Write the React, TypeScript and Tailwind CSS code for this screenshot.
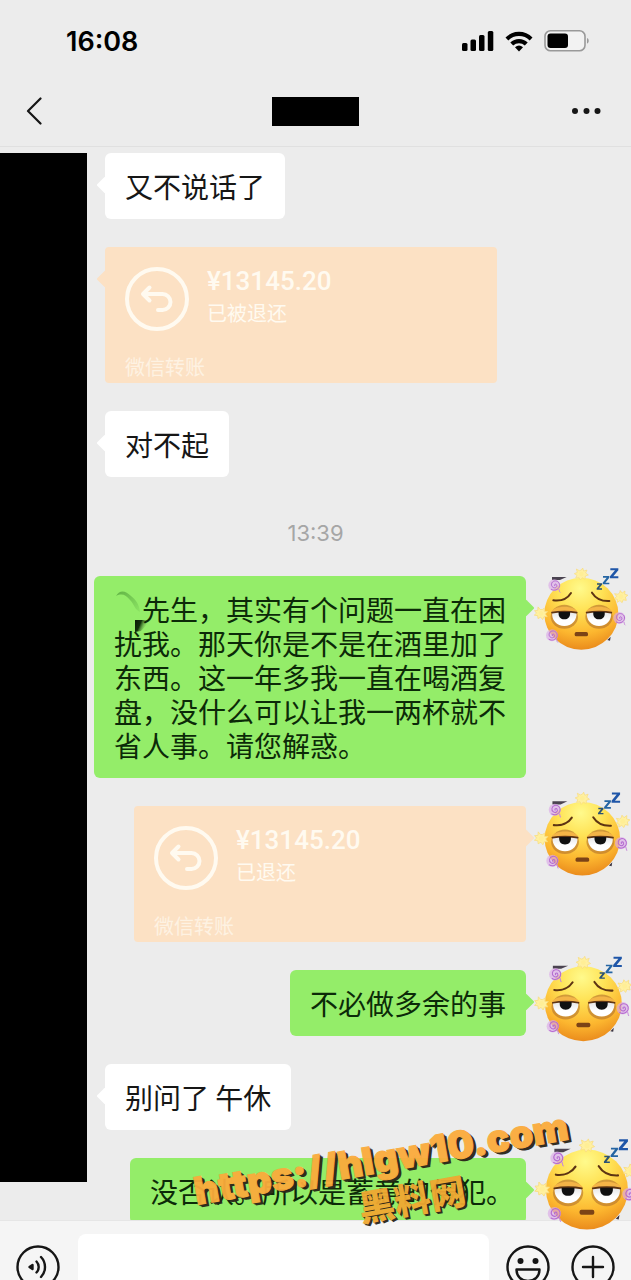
import type { ReactNode } from "react";

const cjk = "font-['Noto_Sans_CJK_SC',sans-serif]";

function Spiral({ x, y }: { x: number; y: number }) {
  return (
    <g transform={`translate(${x} ${y})`} fill="none" strokeLinecap="round">
      <circle r="18" fill="#dcaae8" fillOpacity="0.65" />
      <path
        d="M1 1c-3-4 4-7 6-2 3 6-5 11-11 7-8-5-5-17 4-19 10-2 18 7 15 17-3 9-15 14-24 8"
        stroke="#b46bd0"
        strokeWidth="3"
      />
      <path d="M14 12c2 4 0 7 3 9" stroke="#c78adb" strokeWidth="3" />
    </g>
  );
}

function Sparkle({ x, y, r }: { x: number; y: number; r: number }) {
  return (
    <g transform={`translate(${x} ${y}) rotate(${r})`}>
      <path
        d="M0-12 4-18 7-9 17-12 13-3 21 3 12 6 11 16 3 11-3 18-7 10-17 12-13 4-21-1-12-5-15-15-6-10Z"
        fill="#fff0a0"
        stroke="#f9dc7c"
        strokeWidth="2"
        strokeLinejoin="round"
      />
      <circle r="7" fill="#ffee96" />
    </g>
  );
}

function SleepyFace({ size }: { size: string }) {
  return (
    <svg viewBox="0 0 303 300" className={`shrink-0 ${size}`} role="img" aria-label="头像">
      <defs>
        <radialGradient id="skin" cx="0.48" cy="0.15" r="0.88">
          <stop offset="0" stopColor="#fffa8c" />
          <stop offset="0.35" stopColor="#ffe255" />
          <stop offset="0.72" stopColor="#fcb62f" />
          <stop offset="1" stopColor="#e8861a" />
        </radialGradient>
        <linearGradient id="eye" x1="0" y1="0" x2="0" y2="1">
          <stop offset="0" stopColor="#e6e6e6" />
          <stop offset="0.6" stopColor="#ffffff" />
        </linearGradient>
      </defs>
      <path d="M66 51h44l-20 9H66Z" fill="#4a4350" />
      <path d="m232 240 10-10-2 12Z" fill="#3a3340" />
      <ellipse cx="154" cy="161" rx="111" ry="108" fill="url(#skin)" />
      <ellipse cx="103" cy="170" rx="41" ry="36" fill="#b9772c" fillOpacity="0.65" />
      <ellipse cx="207" cy="170" rx="41" ry="36" fill="#b9772c" fillOpacity="0.65" />
      <path d="M67 156h72c4 24-14 42-36 42s-40-18-36-42Z" fill="url(#eye)" />
      <path d="M171 156h72c4 24-14 42-36 42s-40-18-36-42Z" fill="url(#eye)" />
      <path d="M62 158c8-24 74-24 82 0-24-5-58-5-82 0Z" fill="#f4b447" />
      <path d="M166 158c8-24 74-24 82 0-24-5-58-5-82 0Z" fill="#f4b447" />
      <path
        d="M66 158c20-4 55-4 74 0M170 158c20-4 55-4 74 0"
        fill="none"
        stroke="#5d3413"
        strokeWidth="5"
        strokeLinecap="round"
      />
      <path d="M86 156h34c2 15-6 22-17 22s-19-7-17-22Z" fill="#111" />
      <path d="M190 156h34c2 15-6 22-17 22s-19-7-17-22Z" fill="#111" />
      <path
        d="M70 121c23 3 43-6 53-22M186 98c10 16 29 26 52 25"
        fill="none"
        stroke="#5d3413"
        strokeWidth="6"
        strokeLinecap="round"
      />
      <rect x="134" y="216" width="40" height="13" rx="5" fill="#7c4316" />
      <Sparkle x={154} y={42} r={0} />
      <Sparkle x={33} y={160} r={20} />
      <Sparkle x={273} y={110} r={-20} />
      <Spiral x={73} y={76} />
      <Spiral x={66} y={226} />
      <Spiral x={268} y={174} />
      <path d="M201 70h15v4l-9 11h9v4h-16v-4l9-11h-8Z" fill="#2b5275" />
      <path d="M219 48h19v5l-12 15h12v5h-20v-5l12-15h-11Z" fill="#2565a3" />
      <path d="M241 25h24v6l-15 18h15v6h-25v-6l15-18h-14Z" fill="#1f56a8" />
    </svg>
  );
}

function Tail({ side, color }: { side: "left" | "right"; color: string }) {
  return (
    <span
      className={`absolute top-[26px] size-3 rotate-45 rounded-[1px] ${color} ${
        side === "left" ? "-left-1.5" : "-right-1.5"
      }`}
    />
  );
}

function Bubble({
  mine = false,
  padding = "px-5",
  children,
}: {
  mine?: boolean;
  padding?: string;
  children: ReactNode;
}) {
  const color = mine ? "bg-[#94ed69]" : "bg-white";
  return (
    <div
      className={`relative max-w-[432px] rounded-md py-4 text-[28px] leading-[34px] ${padding} ${color} ${
        mine ? "text-[#0c2a08]" : "text-[#161616]"
      }`}
    >
      <Tail side={mine ? "right" : "left"} color={color} />
      <p className="relative">{children}</p>
    </div>
  );
}

function Transfer({ mine = false, status }: { mine?: boolean; status: string }) {
  return (
    <div className="relative h-[136px] w-[392px] rounded-sm bg-[#fce1c4] px-5 text-[#fffaf0]">
      <Tail side={mine ? "right" : "left"} color="bg-[#fce1c4]" />
      <div className="flex gap-[18px] pt-5">
        <svg viewBox="0 0 64 64" className="size-16" fill="none" stroke="currentColor">
          <circle cx="32" cy="32" r="30" strokeWidth="4" />
          <path
            d="M24.500 20.500 18 27l6.500 6.500M19 27H37.500a8 8 0 0 1 0 16H33"
            strokeWidth="4"
            strokeLinecap="round"
            strokeLinejoin="round"
          />
        </svg>
        <div>
          <p className="font-[Roboto,sans-serif] text-[26px] leading-7 font-medium">¥13145.20</p>
          <p className="mt-1 text-xl leading-7">{status}</p>
        </div>
      </div>
      <p className="mt-5 text-xl leading-8 opacity-70">微信转账</p>
    </div>
  );
}

function Row({ avatar, children }: { avatar: string; children: ReactNode }) {
  return (
    <li className="flex justify-end">
      {children}
      <div className="relative z-20 -mb-28 flex w-[105px] shrink-0 items-start pl-1">
        <SleepyFace size={avatar} />
      </div>
    </li>
  );
}

function Smudge() {
  return (
    <svg viewBox="0 0 28 34" className="-my-2 inline-block h-[34px] w-7 overflow-visible align-middle" aria-hidden="true">
      <defs>
        <linearGradient id="ink" x1="0" y1="0" x2="1" y2="0.4">
          <stop offset="0" stopColor="#0a1a06" />
          <stop offset="0.45" stopColor="#12300c" />
          <stop offset="1" stopColor="#94ed69" stopOpacity="0" />
        </linearGradient>
        <linearGradient id="stroke" x1="0" y1="0" x2="1" y2="1">
          <stop offset="0" stopColor="#4b9a36" stopOpacity="0.7" />
          <stop offset="1" stopColor="#4b9a36" stopOpacity="0.1" />
        </linearGradient>
      </defs>
      <path d="M2 0c4-7 10-5 15 0 5 4 8 8 9 16-5-2-6-8-10-12C12-1 8-3 2 0Z" fill="url(#stroke)" />
      <path d="M21 24h13v4c-3 2-4 4-7 7l-6 1Z" fill="url(#ink)" />
    </svg>
  );
}

function StatusIcons() {
  return (
    <svg viewBox="0 0 130 24" className="h-6 w-[130px]" aria-label="信号、无线网络、电池" role="img">
      <rect x="2" y="14" width="5.500" height="8" rx="1.500" />
      <rect x="10.500" y="10.500" width="5.500" height="11.500" rx="1.500" />
      <rect x="19" y="6" width="5.500" height="16" rx="1.500" />
      <rect x="27.800" y="2" width="5.500" height="20" rx="1.500" />
      <path d="M45.500 8.500a19 19 0 0 1 27 0l-2.800 3a15 15 0 0 0-21.400 0Z" />
      <path d="M50.300 13.500a12.500 12.500 0 0 1 17.400 0l-2.900 3a8.500 8.500 0 0 0-11.600 0Z" />
      <path d="M55 18.200a6.200 6.200 0 0 1 8 0L59 22.400Z" />
      <rect x="85" y="1.800" width="40" height="20" rx="5.500" fill="#f2f2f2" stroke="#999" strokeWidth="1.600" />
      <rect x="87.500" y="4.500" width="20.500" height="14.500" rx="3" />
      <path d="M127 9c2.300.6 2.300 5 0 5.600Z" fill="#999" />
    </svg>
  );
}

export default function App() {
  return (
    <div lang="zh-CN" className={`relative flex h-screen flex-col overflow-hidden bg-[#ececec] ${cjk}`}>
      <header className="shrink-0 border-b border-[#e0e0e0]">
        <div className="flex h-[82px] items-center justify-between pr-[41px] pl-[66px]">
          <time className="pt-0.5 font-[Inter,sans-serif] text-[27px] leading-8 font-semibold text-black">16:08</time>
          <StatusIcons />
        </div>
        <nav className="grid grid-cols-3 items-center pt-3 pb-[18px]">
          <button type="button" aria-label="返回" className="ml-[26px] justify-self-start">
            <svg viewBox="0 0 16 34" className="h-[34px] w-4" fill="none" stroke="#161616" strokeWidth="2.200" strokeLinecap="round" strokeLinejoin="round">
              <path d="M14.500 4.500 2 17l12.500 12.500" />
            </svg>
          </button>
          <div className="h-[29px] w-[87px] justify-self-center bg-black" />
          <button type="button" aria-label="更多" className="mr-[30px] justify-self-end">
            <svg viewBox="0 0 30 10" className="h-2.5 w-[30px]" fill="#161616">
              <circle cx="4" cy="5" r="3" />
              <circle cx="15.500" cy="5" r="3" />
              <circle cx="26.500" cy="5" r="3" />
            </svg>
          </button>
        </nav>
      </header>

      <main className="flex min-h-0 flex-1 pt-1.5">
        <div className="mb-[38px] w-[87px] shrink-0 bg-black" />
        <ul className="flex min-w-0 flex-1 flex-col gap-7">
          <li className="ml-[18px] flex">
            <Bubble>又不说话了</Bubble>
          </li>
          <li className="ml-[18px] flex">
            <Transfer status="已被退还" />
          </li>
          <li className="ml-[18px] flex">
            <Bubble>对不起</Bubble>
          </li>
          <li className="-ml-[87px] pt-4 pb-[3px] text-center font-[Inter,sans-serif] text-[22px] leading-6 text-[#a6a6a6]">
            13:39
          </li>
          <Row avatar="w-[101px] -mt-4">
            <Bubble mine>
              <Smudge />
              先生，其实有个问题一直在困扰我。那天你是不是在酒里加了东西。这一年多我一直在喝酒复盘，没什么可以让我一两杯就不省人事。请您解惑。
            </Bubble>
          </Row>
          <Row avatar="w-[103px] -mt-[22px]">
            <Transfer mine status="已退还" />
          </Row>
          <Row avatar="w-[105px] -mt-[22px]">
            <Bubble mine>不必做多余的事</Bubble>
          </Row>
          <li className="ml-[18px] flex">
            <Bubble>别问了 午休</Bubble>
          </li>
          <Row avatar="w-28 -mt-7">
            <Bubble mine padding="pl-5 pr-3">
              没否认。所以是蓄意的侵犯。
            </Bubble>
          </Row>
        </ul>
      </main>

      <footer className="relative z-10 h-[60px] shrink-0 border-t border-[#e6e6e6] bg-[#f5f5f5]">
        <form className="flex items-center pt-[13px] pr-4 pl-4" onSubmit={(e) => e.preventDefault()}>
          <button type="button" aria-label="语音" className="mr-[18px] shrink-0">
            <svg viewBox="0 0 44 44" className="size-11" fill="none" stroke="#161616" strokeWidth="2.400" strokeLinecap="round">
              <circle cx="22" cy="22" r="20.500" />
              <path d="M13.500 22 16.500 20v4Z" fill="#161616" strokeLinejoin="round" />
              <path d="M20.500 16.500a8 8 0 0 1 0 11M25 12a14.500 14.500 0 0 1 0 20" />
            </svg>
          </button>
          <input aria-label="消息" className="h-[66px] min-w-0 flex-1 rounded-lg bg-white px-4 text-[28px] outline-none" />
          <button type="button" aria-label="表情" className="ml-[17px] shrink-0">
            <svg viewBox="0 0 44 44" className="size-11" fill="none" stroke="#161616" strokeWidth="2.400">
              <circle cx="22" cy="22" r="20.500" />
              <circle cx="14.500" cy="16" r="3" fill="#161616" stroke="none" />
              <circle cx="29.500" cy="16" r="3" fill="#161616" stroke="none" />
              <path d="M10.500 24.500h23c0 7-5 11.500-11.500 11.500s-11.500-4.500-11.500-11.500Z" strokeLinejoin="round" />
            </svg>
          </button>
          <button type="button" aria-label="添加" className="ml-[21px] shrink-0">
            <svg viewBox="0 0 44 44" className="size-11" fill="none" stroke="#161616" strokeWidth="2.400" strokeLinecap="round">
              <circle cx="22" cy="22" r="20.500" />
              <path d="M22 12v20M12 22h20" />
            </svg>
          </button>
        </form>
      </footer>

      <div className="pointer-events-none absolute bottom-[67px] left-[198px] z-30 origin-bottom-left -rotate-10 text-[#fbab3c] opacity-95 [-webkit-text-stroke:1px_#fbab3c] [text-shadow:1px_1px_0_#2a2418,2px_2px_0_#2a2418,3px_3px_0_#2a2418]">
        <p className="font-[Inter,sans-serif] text-[38px] leading-[44px] font-black whitespace-nowrap">https://hlgw10.com</p>
      </div>
      <div className="pointer-events-none absolute bottom-[54px] left-[362px] z-30 origin-bottom-left -rotate-10 text-[#f0a832] opacity-95 [text-shadow:1px_1px_0_#2a2418,2px_2px_0_#2a2418]">
        <p className="text-4xl leading-10 font-black whitespace-nowrap">黑料网</p>
      </div>
    </div>
  );
}
